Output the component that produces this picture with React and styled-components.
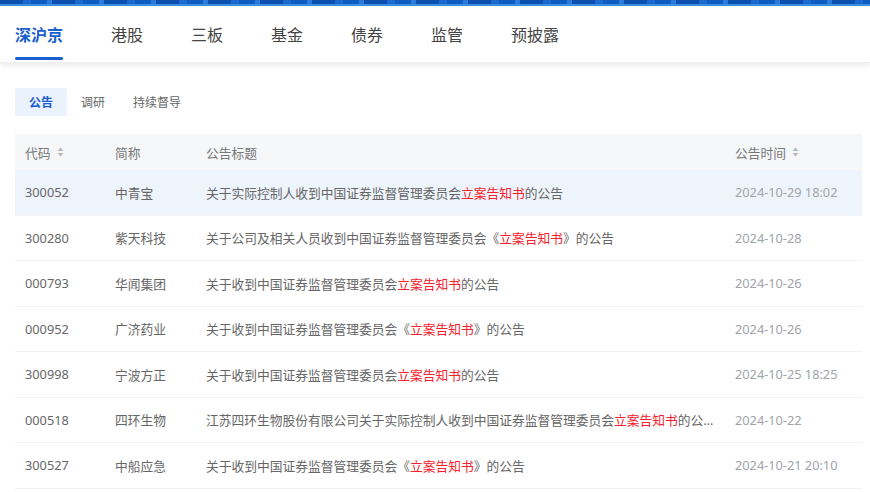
import React from 'react'
import styled, {createGlobalStyle} from 'styled-components'

const GlobalStyle = createGlobalStyle`
body {
    margin: 0;
    background: #fff;
    font-family: "Noto Sans", "Noto Sans CJK SC", sans-serif;
}
`

const markets = ['深沪京', '港股', '三板', '基金', '债券', '监管', '预披露']
const subTabs = ['公告', '调研', '持续督导']

const rows = [
    {code: '300052', name: '中青宝', pre: '关于实际控制人收到中国证券监督管理委员会', mark: '立案告知书', post: '的公告', time: '2024-10-29 18:02', hot: true},
    {code: '300280', name: '紫天科技', pre: '关于公司及相关人员收到中国证券监督管理委员会《', mark: '立案告知书', post: '》的公告', time: '2024-10-28'},
    {code: '000793', name: '华闻集团', pre: '关于收到中国证券监督管理委员会', mark: '立案告知书', post: '的公告', time: '2024-10-26'},
    {code: '000952', name: '广济药业', pre: '关于收到中国证券监督管理委员会《', mark: '立案告知书', post: '》的公告', time: '2024-10-26'},
    {code: '300998', name: '宁波方正', pre: '关于收到中国证券监督管理委员会', mark: '立案告知书', post: '的公告', time: '2024-10-25 18:25'},
    {code: '000518', name: '四环生物', pre: '江苏四环生物股份有限公司关于实际控制人收到中国证券监督管理委员会', mark: '立案告知书', post: '的公告', time: '2024-10-22'},
    {code: '300527', name: '中船应急', pre: '关于收到中国证券监督管理委员会《', mark: '立案告知书', post: '》的公告', time: '2024-10-21 20:10'},
]

const SortIcon = () => (
    <svg width="7" height="10" viewBox="0 0 7 10" style={{marginLeft: 6}}>
        <path d="M3.5 0.5 L6.5 4 H0.5 Z" fill="#b4b8bf" />
        <path d="M3.5 9.5 L6.5 6 H0.5 Z" fill="#b4b8bf" />
    </svg>
)

export default function App() {
    return (
        <Page>
            <GlobalStyle />
            <Banner />
            <MarketBar>
                {markets.map((m, i) => (
                    <MarketTab key={m} active={i === 0}>{m}</MarketTab>
                ))}
            </MarketBar>
            <Content>
                <SubTabs>
                    {subTabs.map((t, i) => (
                        <SubTab key={t} active={i === 0}>{t}</SubTab>
                    ))}
                </SubTabs>
                <Table>
                    <HeadRow>
                        <Cell>代码<SortIcon /></Cell>
                        <Cell>简称</Cell>
                        <Cell>公告标题</Cell>
                        <Cell>公告时间<SortIcon /></Cell>
                    </HeadRow>
                    {rows.map(r => (
                        <Row key={r.code} hot={r.hot}>
                            <Cell>{r.code}</Cell>
                            <Cell>{r.name}</Cell>
                            <Title>{r.pre}<Mark>{r.mark}</Mark>{r.post}</Title>
                            <Time>{r.time}</Time>
                        </Row>
                    ))}
                </Table>
            </Content>
        </Page>
    )
}

const Page = styled.div`
width: 870px;
height: 492px;
overflow: hidden;
background: #fff;
`

const Banner = styled.div`
height: 6px;
background:
    linear-gradient(180deg, transparent 70%, #3d8ee0 70%),
    repeating-linear-gradient(90deg, #0b4fae 0 23px, #1a6bd0 23px 31px, #0d5cc0 31px 47px, #2a7ad8 47px 52px),
    #0b55b5;
`

const MarketBar = styled.div`
display: flex;
gap: 48px;
height: 56px;
padding: 0 15px;
box-shadow: 0 3px 5px rgba(0, 0, 0, 0.07);
border-bottom: 1px solid #eceef1;
position: relative;
`

const MarketTab = styled.div`
display: flex;
align-items: center;
height: 100%;
font-size: 16px;
font-family: "Noto Sans CJK SC", sans-serif;
color: ${p => (p.active ? '#1a5fd0' : '#444')};
font-weight: ${p => (p.active ? 600 : 400)};
position: relative;
&::after {
    content: '';
    display: ${p => (p.active ? 'block' : 'none')};
    position: absolute;
    left: 0;
    right: 0;
    bottom: 2px;
    height: 3px;
    border-radius: 2px;
    background: #1a5fd0;
}
`

const Content = styled.div`
padding: 25px 8px 0 15px;
`

const SubTabs = styled.div`
display: flex;
margin-bottom: 18px;
`

const SubTab = styled.div`
height: 28px;
line-height: 28px;
padding: 0 14px;
font-size: 12px;
font-family: "Noto Sans CJK SC", sans-serif;
border-radius: 2px;
color: ${p => (p.active ? '#1a5fd0' : '#666')};
font-weight: ${p => (p.active ? 600 : 400)};
background: ${p => (p.active ? '#eaf2fd' : 'transparent')};
`

const Table = styled.div`
display: flex;
flex-direction: column;
font-size: 12.75px;
font-family: "Noto Sans", "Noto Sans CJK SC", sans-serif;
`

const grid = `
display: grid;
grid-template-columns: 90px 91px 529px 137px;
align-items: center;
`

const HeadRow = styled.div`
${grid}
height: 36px;
background: #f6f7f9;
color: #777;
`

const Row = styled.div`
${grid}
height: 45.5px;
box-sizing: border-box;
border-bottom: 1px solid #f0f2f5;
background: ${p => (p.hot ? '#eef4fb' : '#fff')};
color: #666;
`

const Cell = styled.div`
padding: 0 10px;
display: flex;
align-items: center;
white-space: nowrap;
`

const Title = styled.div`
padding: 0 10px;
white-space: nowrap;
overflow: hidden;
text-overflow: ellipsis;
`

const Mark = styled.span`
color: #f5222d;
`

const Time = styled.div`
padding: 0 10px;
color: #a0a4aa;
white-space: nowrap;
`
